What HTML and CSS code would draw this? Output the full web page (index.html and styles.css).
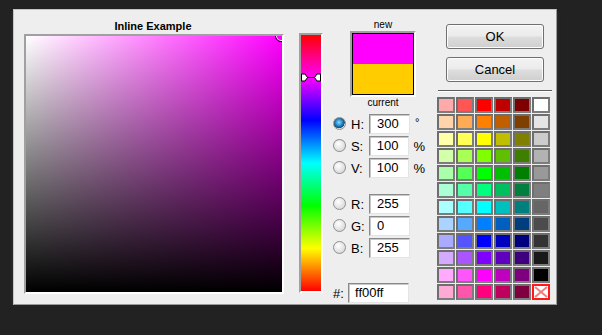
FILE: index.html
```html
<!DOCTYPE html>
<html>
<head>
<meta charset="utf-8">
<link rel="stylesheet" href="styles.css">
</head>
<body>
<div class="panel">
  <div class="col-sv">
    <div class="title">Inline Example</div>
    <div class="sv-frame">
      <div class="sv-map">
        <div class="sv-marker"></div>
      </div>
    </div>
  </div>
  <div class="col-hue">
    <div class="hue-frame">
      <div class="hue-bar">
        <svg class="hue-marker" width="20" height="9" viewBox="0 0 20 9">
          <line x1="6" y1="4.5" x2="14" y2="4.5" stroke="#000" stroke-width="1"/>
          <polygon points="0.5,1 4,1 6.5,4.5 4,8 0.5,8" fill="#fff" stroke="#000" stroke-width="1"/>
          <polygon points="19.5,1 16,1 13.5,4.5 16,8 19.5,8" fill="#fff" stroke="#000" stroke-width="1"/>
        </svg>
      </div>
    </div>
  </div>
  <div class="col-fields">
    <div class="preview">
      <div class="cap cap-new">new</div>
      <div class="preview-frame">
        <div class="preview-inner">
          <div class="pv-new"></div>
          <div class="pv-cur"></div>
        </div>
      </div>
      <div class="cap">current</div>
    </div>
    <div class="group group-hsv">
      <div class="row"><span class="radio on"></span><span class="lbl">H:</span><span class="field">300</span><span class="unit deg">°</span></div>
      <div class="row"><span class="radio"></span><span class="lbl">S:</span><span class="field">100</span><span class="unit">%</span></div>
      <div class="row"><span class="radio"></span><span class="lbl">V:</span><span class="field">100</span><span class="unit">%</span></div>
    </div>
    <div class="group group-rgb">
      <div class="row"><span class="radio"></span><span class="lbl">R:</span><span class="field">255</span></div>
      <div class="row"><span class="radio"></span><span class="lbl">G:</span><span class="field">0</span></div>
      <div class="row"><span class="radio"></span><span class="lbl">B:</span><span class="field">255</span></div>
    </div>
    <div class="row hex-row"><span class="hex-lbl">#:</span><span class="field hex">ff00ff</span></div>
  </div>
  <div class="col-side">
    <div class="btn btn-ok">OK</div>
    <div class="btn btn-cancel">Cancel</div>
    <div class="sep"></div>
    <div class="grid">
      <span class="cell" style="background:#ffaaaa"></span><span class="cell" style="background:#ff5555"></span><span class="cell" style="background:#ff0000"></span><span class="cell" style="background:#bf0000"></span><span class="cell" style="background:#7f0000"></span><span class="cell" style="background:#ffffff"></span>
      <span class="cell" style="background:#ffd4aa"></span><span class="cell" style="background:#ffaa55"></span><span class="cell" style="background:#ff7f00"></span><span class="cell" style="background:#bf5f00"></span><span class="cell" style="background:#7f3f00"></span><span class="cell" style="background:#e5e5e5"></span>
      <span class="cell" style="background:#ffffaa"></span><span class="cell" style="background:#ffff55"></span><span class="cell" style="background:#ffff00"></span><span class="cell" style="background:#bfbf00"></span><span class="cell" style="background:#7f7f00"></span><span class="cell" style="background:#cccccc"></span>
      <span class="cell" style="background:#d4ffaa"></span><span class="cell" style="background:#aaff55"></span><span class="cell" style="background:#7fff00"></span><span class="cell" style="background:#5fbf00"></span><span class="cell" style="background:#3f7f00"></span><span class="cell" style="background:#b2b2b2"></span>
      <span class="cell" style="background:#aaffaa"></span><span class="cell" style="background:#55ff55"></span><span class="cell" style="background:#00ff00"></span><span class="cell" style="background:#00bf00"></span><span class="cell" style="background:#007f00"></span><span class="cell" style="background:#999999"></span>
      <span class="cell" style="background:#aaffd4"></span><span class="cell" style="background:#55ffaa"></span><span class="cell" style="background:#00ff7f"></span><span class="cell" style="background:#00bf5f"></span><span class="cell" style="background:#007f3f"></span><span class="cell" style="background:#7f7f7f"></span>
      <span class="cell" style="background:#aaffff"></span><span class="cell" style="background:#55ffff"></span><span class="cell" style="background:#00ffff"></span><span class="cell" style="background:#00bfbf"></span><span class="cell" style="background:#007f7f"></span><span class="cell" style="background:#666666"></span>
      <span class="cell" style="background:#aad4ff"></span><span class="cell" style="background:#55aaff"></span><span class="cell" style="background:#007fff"></span><span class="cell" style="background:#005fbf"></span><span class="cell" style="background:#003f7f"></span><span class="cell" style="background:#4c4c4c"></span>
      <span class="cell" style="background:#aaaaff"></span><span class="cell" style="background:#5555ff"></span><span class="cell" style="background:#0000ff"></span><span class="cell" style="background:#0000bf"></span><span class="cell" style="background:#00007f"></span><span class="cell" style="background:#333333"></span>
      <span class="cell" style="background:#d4aaff"></span><span class="cell" style="background:#aa55ff"></span><span class="cell" style="background:#7f00ff"></span><span class="cell" style="background:#5f00bf"></span><span class="cell" style="background:#3f007f"></span><span class="cell" style="background:#191919"></span>
      <span class="cell" style="background:#ffaaff"></span><span class="cell" style="background:#ff55ff"></span><span class="cell" style="background:#ff00ff"></span><span class="cell" style="background:#bf00bf"></span><span class="cell" style="background:#7f007f"></span><span class="cell" style="background:#000000"></span>
      <span class="cell" style="background:#ffaad4"></span><span class="cell" style="background:#ff55aa"></span><span class="cell" style="background:#ff007f"></span><span class="cell" style="background:#bf005f"></span><span class="cell" style="background:#7f003f"></span>
      <span class="cell none"><svg width="14" height="12" viewBox="0 0 14 12"><line x1="1" y1="1" x2="13" y2="11" stroke="#f08080" stroke-width="2"/><line x1="13" y1="1" x2="1" y2="11" stroke="#f08080" stroke-width="2"/></svg></span>
    </div>
  </div>
</div>
</body>
</html>
```

FILE: styles.css
```css
html, body {
  margin: 0;
  padding: 0;
  background: #222222;
  font-family: "Liberation Sans", Arial, sans-serif;
  color: #000;
}

.panel {
  box-sizing: border-box;
  width: 544px;
  height: 296px;
  margin: 9px 0 0 13px;
  background: #eeeeee;
  border: 1px solid #c4c4c4;
  border-right-color: #9a9a9a;
  border-bottom-color: #9a9a9a;
  box-shadow: 0 3px 3px rgba(80, 80, 80, 0.55);
  display: flex;
  align-items: flex-start;
}

/* SV map column */
.col-sv {
  margin-left: 10px;
  width: 260px;
  padding-top: 9px;
}
.title {
  font-size: 11px;
  font-weight: bold;
  line-height: 14px;
  text-align: center;
  margin-bottom: 1px;
  padding-right: 2px;
}
.sv-frame {
  width: 256px;
  height: 256px;
  border: 2px solid #ffffff;
  border-top-color: #a0a0a0;
  border-left-color: #a0a0a0;
}
.sv-map {
  position: relative;
  width: 256px;
  height: 256px;
  overflow: hidden;
  background:
    linear-gradient(to top, #000 0%, rgba(0,0,0,0) 100%),
    linear-gradient(to right, #fff 0%, rgba(255,255,255,0) 100%),
    #ff00ff;
}
.sv-marker {
  position: absolute;
  left: 249px;
  top: -6px;
  width: 10px;
  height: 10px;
  border-radius: 50%;
  border: 1px solid #000;
  box-shadow: inset 0 0 0 1px #fff;
}

/* Hue column */
.col-hue {
  margin-left: 15px;
  margin-top: 23px;
}
.hue-frame {
  width: 20px;
  height: 256px;
  border: 2px solid #ffffff;
  border-top-color: #a0a0a0;
  border-left-color: #a0a0a0;
}
.hue-bar {
  position: relative;
  width: 20px;
  height: 256px;
  background: linear-gradient(to bottom,
    #ff0000 0%, #ff00ff 16.667%, #0000ff 33.333%, #00ffff 50%,
    #00ff00 66.667%, #ffff00 83.333%, #ff0000 100%);
}
.hue-marker {
  position: absolute;
  left: 0;
  top: 38px;
  display: block;
}

/* Fields column */
.col-fields {
  margin-left: 10px;
  width: 92px;
  padding-top: 9px;
}
.preview {
  margin-left: 17px;
  width: 66px;
}
.cap {
  font-size: 10px;
  line-height: 12px;
  text-align: center;
}
.preview-frame {
  width: 62px;
  height: 62px;
  border: 2px solid #ffffff;
  border-top-color: #a0a0a0;
  border-left-color: #a0a0a0;
}
.preview-inner {
  width: 60px;
  height: 60px;
  border: 1px solid #000;
}
.pv-new {
  height: 30px;
  background: #ff00ff;
}
.pv-cur {
  height: 30px;
  background: #ffcc00;
}

.group {
  display: flex;
  flex-direction: column;
  gap: 2px;
}
.group-hsv { margin-top: 5px; }
.group-rgb { margin-top: 16px; }

.row {
  display: flex;
  align-items: center;
  height: 20px;
  font-size: 13px;
}
.radio {
  box-sizing: border-box;
  width: 13px;
  height: 13px;
  border-radius: 50%;
  border: 1px solid #8f8f8f;
  background: radial-gradient(circle at 40% 35%, #ffffff 0%, #f0f0f0 30%, #cfcfcf 100%);
  margin-right: 5px;
  margin-top: -1px;
}
.radio.on {
  background:
    radial-gradient(circle at 45% 40%, #8fdcff 0%, #2a8fd0 35%, #0d4c7e 62%, rgba(0,0,0,0) 66%),
    radial-gradient(circle at 40% 35%, #ffffff 0%, #f0f0f0 30%, #cfcfcf 100%);
}
.lbl {
  width: 18px;
}
.field {
  box-sizing: border-box;
  width: 41px;
  height: 20px;
  line-height: 18px;
  padding-left: 7px;
  background: #ffffff;
  border: 1px solid #e4e4e4;
  border-top-color: #8a8a8a;
  border-left-color: #8a8a8a;
  box-shadow: inset 1px 1px 0 #c8c8c8;
  font-size: 13px;
}
.unit {
  margin-left: 4px;
}
.unit.deg {
  align-self: flex-start;
  font-size: 11px;
  line-height: 16px;
  margin-left: 5px;
}
.hex-row {
  margin-top: 25px;
}
.hex-lbl {
  width: 15px;
}
.field.hex {
  width: 61px;
  padding-left: 6px;
}

/* Side column */
.col-side {
  margin-left: 12px;
  width: 115px;
  padding-top: 14px;
}
.btn {
  box-sizing: border-box;
  margin-left: 9px;
  width: 98px;
  height: 25px;
  border: 1px solid #707070;
  border-radius: 3px;
  background: linear-gradient(to bottom, #f3f3f3 0%, #ebebeb 48%, #dddddd 52%, #cfcfcf 100%);
  box-shadow: inset 0 0 0 1px #fcfcfc;
  font-size: 13px;
  line-height: 23px;
  text-align: center;
}
.btn-cancel {
  margin-top: 8px;
}
.sep {
  margin-top: 8px;
  margin-left: 1px;
  width: 114px;
  height: 1px;
  background: #5c5c5c;
  border-bottom: 1px solid #ffffff;
}
.grid {
  margin-top: 5px;
  display: grid;
  grid-template-columns: repeat(6, 18px);
  grid-auto-rows: 16px;
  gap: 1px;
  background: #eeeeee;
}
.cell {
  box-sizing: border-box;
  display: block;
  border: 2px solid #6e6e6e;
  border-right-color: #7c7c7c;
  border-bottom-color: #7c7c7c;
}
.cell.none {
  background: #ffffff;
  border: 2px solid #ff1a1a;
  display: flex;
  align-items: center;
  justify-content: center;
}
.cell.none svg {
  display: block;
}
```
